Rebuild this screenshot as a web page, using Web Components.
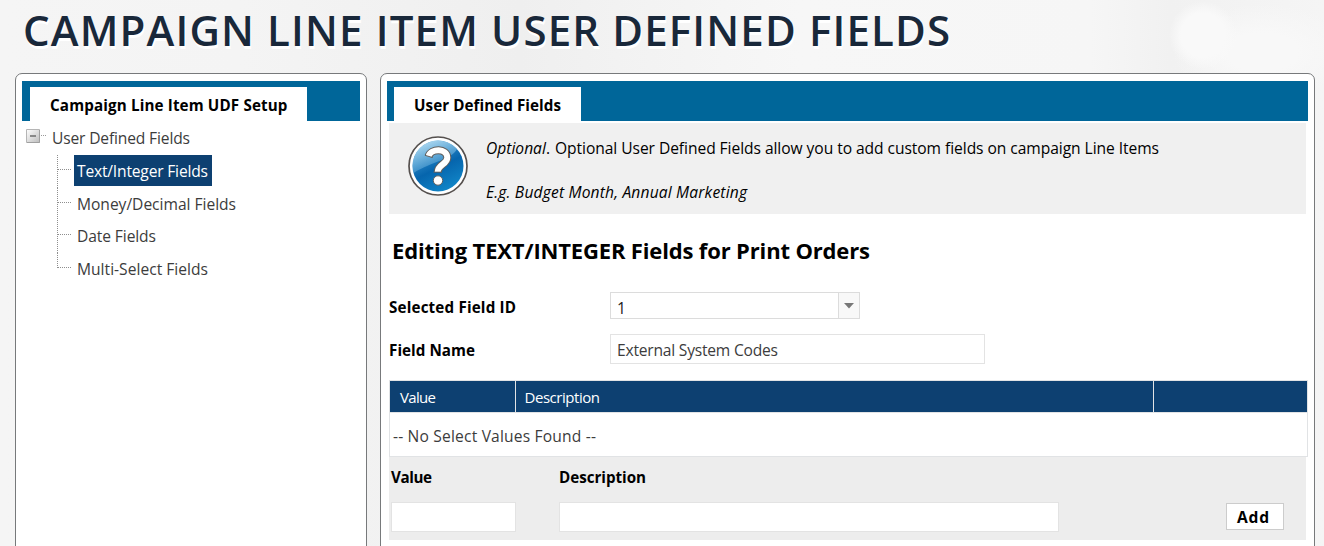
<!DOCTYPE html>
<html lang="en"><head><meta charset="utf-8"><title>Campaign Line Item User Defined Fields</title>
<style>
html,body{margin:0;height:546px;overflow:hidden}
body{font:15.6px/20px "Open Sans","Noto Sans",sans-serif;color:#000;background:#f2f2f2}
</style></head><body>
<udf-page></udf-page>
<script>
const make=(name,html,init)=>customElements.define(name,class extends HTMLElement{
  constructor(){super();this.attachShadow({mode:'open'}).innerHTML=html}
  connectedCallback(){if(init)init(this)}
});

// Single line of text tracked to the width given by its "w" attribute.
make('fit-text','<style>:host{display:block;white-space:nowrap;width:max-content}span{display:inline-block}</style><span><slot></slot></span>',el=>{
  const s=el.shadowRoot.querySelector('span');
  const w=+el.getAttribute('w');
  const n=el.textContent.length;
  if(w&&n>1){
    const natural=s.getBoundingClientRect().width;
    s.style.letterSpacing=((w-natural)/(n-1))+'px';
  }
});

make('ui-panel',`<style>
:host{display:block;box-sizing:border-box;height:600px;border:1px solid #77797b;border-radius:7px;background:#fff;padding:7px 6px 0 6px}
.bar{background:#006699;height:40px;padding:6px 0 0 var(--inset,8px);box-sizing:border-box}
.tab{background:#fff;height:34px;width:var(--tab);box-sizing:border-box;padding:8px 0 0 20px;font-weight:700;font-size:15.2px}
</style><div class="bar"><div class="tab"><slot name="tab"></slot></div></div><slot></slot>`);

make('tree-item',`<style>
:host{display:grid;grid-template-columns:17px auto;height:32.7px;color:#3c3c3c}
.l{border-left:1px dotted #8e8e8e;height:33px;box-sizing:border-box}
.l::before{content:"";display:block;width:13px;height:14px;border-bottom:1px dotted #8e8e8e}
:host([last]) .l{height:15px}
.t{height:31px;box-sizing:border-box;padding:6px 3px 0;width:max-content}
:host([selected]) .t{background:#0d4071;color:#fff;width:138px}
</style><div class="l"></div><div class="t"><slot></slot></div>`);

make('tree-toggle',`<style>:host{display:block;width:20px;height:14px}svg{display:block}</style>
<svg width="20" height="14"><defs><linearGradient id="g" x1="0" y1="0" x2="1" y2="1"><stop stop-color="#fff"/><stop offset="1" stop-color="#bdbdbd"/></linearGradient></defs>
<path d="M.5.5h13v13H.5z" fill="url(#g)" stroke="#b5b5b5"/><path d="M13.5 1v12.500H1" fill="none" stroke="#a0a0a0"/><path d="M4 7h6" stroke="#6b6b6b" stroke-width="1.500"/><path d="M15 6.500h1m1 0h1m1 0h1" stroke="#999"/></svg>`);

make('help-icon',`<style>:host{display:block;width:60px;height:60px}svg{display:block}</style>
<svg width="60" height="60" viewBox="0 0 60 60"><defs><linearGradient id="b" x1=".2" y1="0" x2=".7" y2="1"><stop stop-color="#4ba5da"/><stop offset=".55" stop-color="#0665ad"/><stop offset="1" stop-color="#1187c9"/></linearGradient>
<linearGradient id="s" x1="0" y1="0" x2=".5" y2="1"><stop stop-color="#d5ecf8" stop-opacity=".9"/><stop offset="1" stop-color="#62b0df" stop-opacity=".3"/></linearGradient></defs>
<circle cx="30" cy="30" r="29" fill="#fff" stroke="#55504e" stroke-width="1.700"/>
<circle cx="30" cy="30" r="25.500" fill="url(#b)"/>
<path d="M5.500 37A25.500 25.500 0 0 1 49 13C43 24 25 25 5.500 37z" fill="url(#s)"/>
<g fill="none" stroke-linejoin="round"><path d="M20.500 20.500C23 12 39 12 39.300 21.500C39.500 28.500 30 28 29.700 36" stroke="#625f5d" stroke-width="8"/><path d="M20.500 20.500C23 12 39 12 39.300 21.500C39.500 28.500 30 28 29.700 36" stroke="#fff" stroke-width="6"/></g>
<path d="M17 19.300l7.500 2.200M25.500 36.200h8.400" stroke="#625f5d"/>
<circle cx="30" cy="44.500" r="4.700" fill="#fff" stroke="#625f5d"/></svg>`);

make('text-box',`<style>:host{display:block;box-sizing:border-box;border:1px solid #e3e3e3;background:#fff;height:30px;color:#3c3c3c;padding:5px 6px 0}</style><slot></slot>`);

make('drop-down',`<style>:host{display:grid;grid-template-columns:1fr 21px;box-sizing:border-box;width:250px;height:27px;border:1px solid #dcdcdc;background:#fff}
.v{padding:5px 6px 0;color:#222}.a{border-left:1px solid #dcdcdc;background:#f8f8f8;display:flex;justify-content:center;padding-top:10px}svg{display:block}</style>
<div class="v"><slot></slot></div><div class="a"><svg width="10" height="6"><path d="M0 0h10L5 5.500z" fill="#777"/></svg></div>`);

make('push-button',`<style>:host{display:block;box-sizing:border-box;width:58px;height:27px;border:1px solid #ccc;background:#fff;padding:3px 0 0 10px;font-weight:700}</style><slot></slot>`);

make('values-grid',`<style>
:host{display:block;width:919px;box-sizing:border-box;border:1px solid #e1e3e5}
.h{display:grid;grid-template-columns:125px 637px 1fr;column-gap:1px;background:#e1e3e5;height:31px;border-bottom:1px solid #e1e3e5;color:#fff;font-size:15px}
.h div{background:#0d4071;padding:6px 0 0 10px;box-sizing:border-box}
.h div+div{padding-left:8.500px}
.r{height:43px;box-sizing:border-box;padding:13px 0 0 3px;color:#3c3c3c}
</style><div class="h"><div><fit-text w="36">Value</fit-text></div><div><fit-text w="75.500">Description</fit-text></div><div></div></div>
<div class="r"><slot></slot></div>`);

make('udf-page',`<style>
:host{display:block;width:1324px;height:546px;overflow:hidden;background:
radial-gradient(ellipse 34px 34px at 1203px 35px,#f9f9f9 65%,transparent 100%),
radial-gradient(ellipse 90px 48px at 1262px 52px,#f8f8f8 40%,transparent 100%),
linear-gradient(90deg,#f5f5f5 0,#f4f4f4 240px,#efefef 520px,#f3f3f3 650px,#f7f7f7 800px,#f6f6f6 1090px,#f1f1f1 1170px,#f5f5f5 1324px)}
h1{margin:0;height:73px;box-sizing:border-box;padding:0 0 0 23px;font-size:42px;line-height:60px;font-weight:600;color:#19283a;text-shadow:1px 3px 0 #fff}
.cols{display:grid;grid-template-columns:352px 935px;column-gap:13px;padding-left:15px}
.root{display:flex;gap:10px;padding:8px 0 0 4px;color:#3c3c3c;height:34px;box-sizing:border-box}
.root fit-text{margin-top:-1px}
.kids{padding-left:35px}
.main{padding:2px 0 0 2px}
.info{background:#f0f0f0;width:917px;height:91px;display:flex;gap:18px;padding:13px 0 0 19px;box-sizing:border-box}
.copy{display:grid;row-gap:24px;align-content:start;padding-top:2px}
.copy div{display:flex}
h2{margin:0;padding:21px 0 0 3px;height:78px;box-sizing:border-box;font-size:22px;line-height:30px;font-weight:700}
.f{display:grid;grid-template-columns:221px auto;justify-content:start}
.f.one{height:42px}.f.two{height:46px}
.one b{padding-top:5px}.two b{padding-top:6px}
b{font-weight:700;font-size:15.2px}
.add{background:#ededed;width:917px;height:83px;box-sizing:border-box;padding:10px 0 0 2px;display:grid;grid-template-columns:168px 667px auto;grid-template-rows:35px auto;justify-content:start}
.add push-button{margin-top:1px}
</style>
<h1><fit-text w="927">CAMPAIGN LINE ITEM USER DEFINED FIELDS</fit-text></h1>
<div class="cols">
<ui-panel style="--tab:277px"><fit-text slot="tab" w="237.500">Campaign Line Item UDF Setup</fit-text>
<div class="root"><tree-toggle></tree-toggle><fit-text w="138" style="margin-left:-4px">User Defined Fields</fit-text></div>
<div class="kids">
<tree-item selected><fit-text w="131">Text/Integer Fields</fit-text></tree-item>
<tree-item><fit-text w="159">Money/Decimal Fields</fit-text></tree-item>
<tree-item><fit-text w="79">Date Fields</fit-text></tree-item>
<tree-item last><fit-text w="131">Multi-Select Fields</fit-text></tree-item>
</div></ui-panel>
<ui-panel style="--tab:187px;--inset:7px"><fit-text slot="tab" w="147">User Defined Fields</fit-text>
<div class="main">
<div class="info"><help-icon></help-icon><div class="copy">
<div><fit-text w="64"><i>Optional</i>.</fit-text><fit-text w="604" style="margin-left:5px">Optional User Defined Fields allow you to add custom fields on campaign Line Items</fit-text></div>
<div><fit-text w="261"><i>E.g. Budget Month, Annual Marketing</i></fit-text></div></div></div>
<h2><fit-text w="478">Editing TEXT/INTEGER Fields for Print Orders</fit-text></h2>
<div class="f one"><b><fit-text w="127">Selected Field ID</fit-text></b><drop-down>1</drop-down></div>
<div class="f two"><b><fit-text w="86">Field Name</fit-text></b><text-box style="width:375px"><fit-text w="161">External System Codes</fit-text></text-box></div>
<values-grid><fit-text w="203">-- No Select Values Found --</fit-text></values-grid>
<div class="add"><b><fit-text w="41">Value</fit-text></b><b><fit-text w="87">Description</fit-text></b><span></span>
<text-box style="width:125px"></text-box><text-box style="width:500px"></text-box><push-button><fit-text w="32">Add</fit-text></push-button></div>
</div></ui-panel>
</div>`);
</script></body></html>
